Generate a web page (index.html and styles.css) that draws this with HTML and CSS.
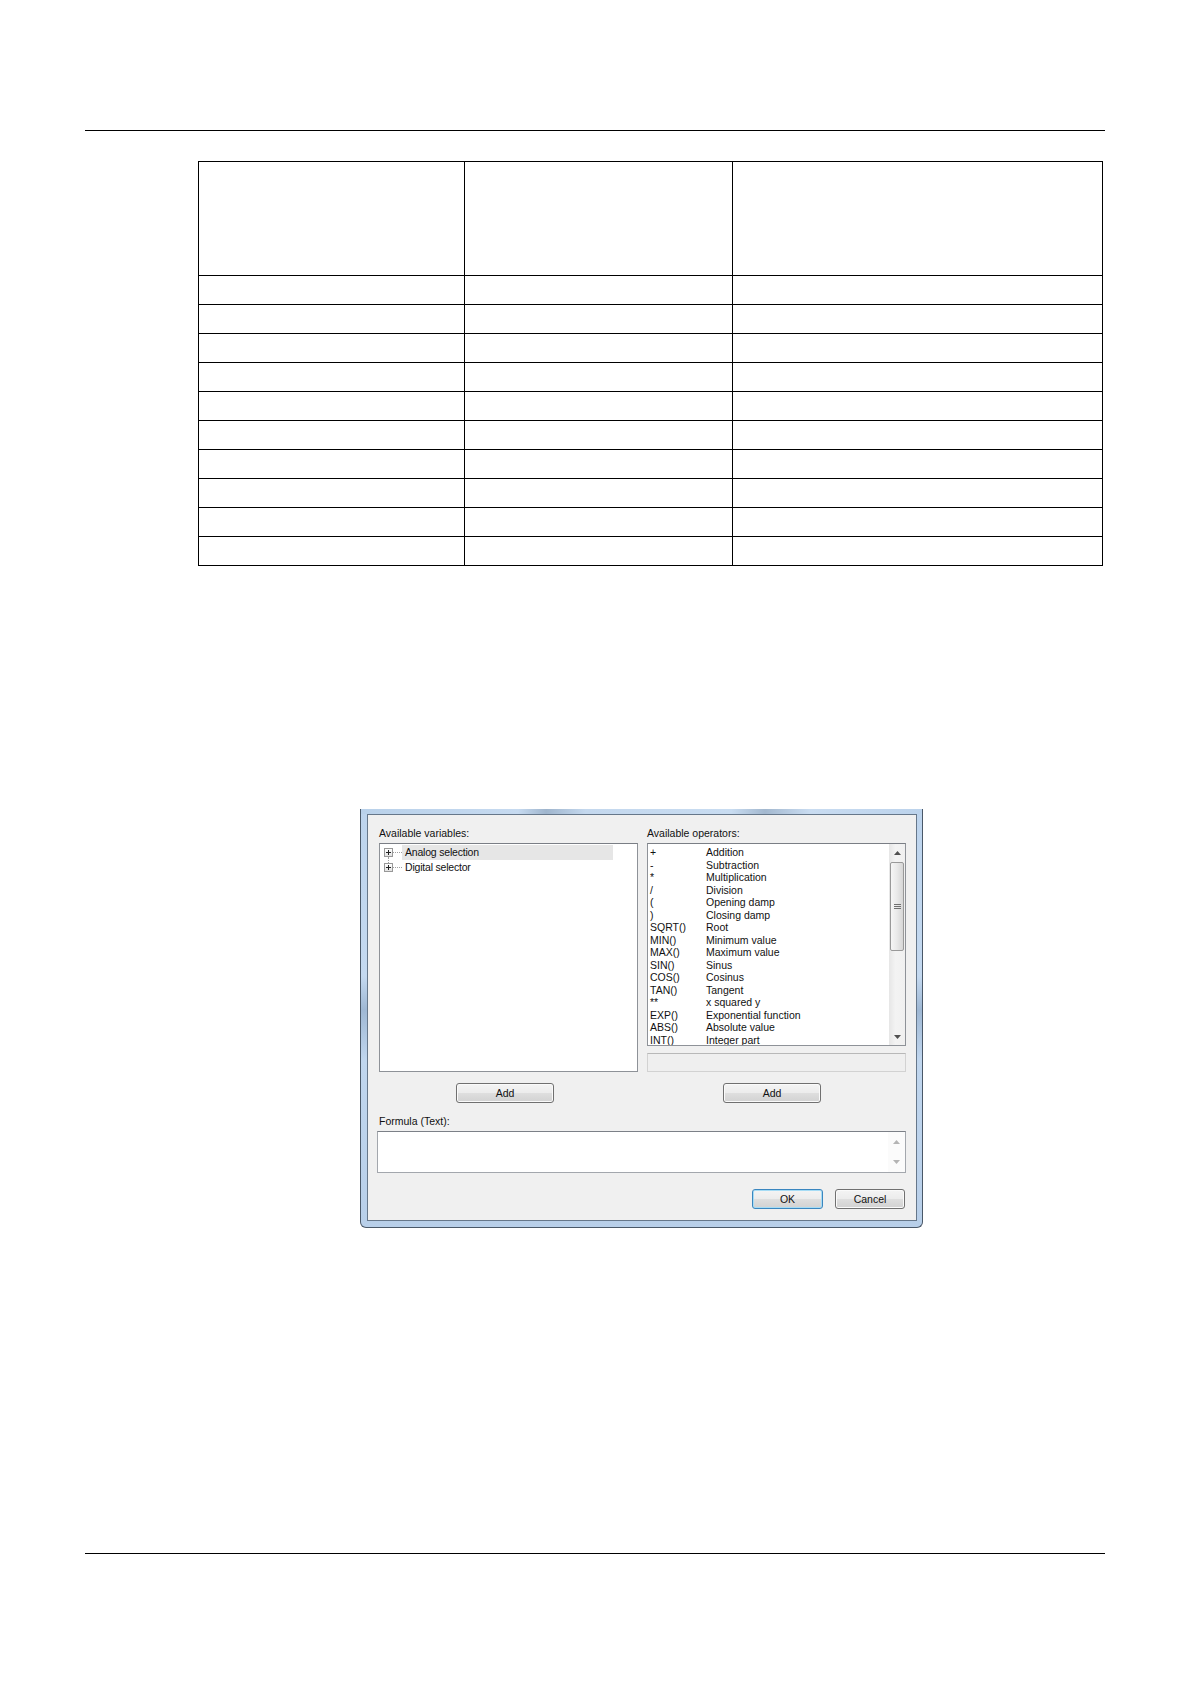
FILE: index.html
```html
<!DOCTYPE html>
<html lang="en">
<head>
<meta charset="utf-8">
<title>Formula editor</title>
<link rel="stylesheet" href="styles.css">
</head>
<body>
<div class="page">
  <div class="rule"></div>

  <div class="grid">
    <div class="cell"></div><div class="cell"></div><div class="cell"></div>
    <div class="cell"></div><div class="cell"></div><div class="cell"></div>
    <div class="cell"></div><div class="cell"></div><div class="cell"></div>
    <div class="cell"></div><div class="cell"></div><div class="cell"></div>
    <div class="cell"></div><div class="cell"></div><div class="cell"></div>
    <div class="cell"></div><div class="cell"></div><div class="cell"></div>
    <div class="cell"></div><div class="cell"></div><div class="cell"></div>
    <div class="cell"></div><div class="cell"></div><div class="cell"></div>
    <div class="cell"></div><div class="cell"></div><div class="cell"></div>
    <div class="cell"></div><div class="cell"></div><div class="cell"></div>
    <div class="cell"></div><div class="cell"></div><div class="cell"></div>
  </div>

  <div class="dialog">
    <div class="panel">
      <div class="cols">
        <div class="col">
          <div class="label">Available variables:</div>
          <div class="box tree">
            <div class="node first">
              <span class="exp"><svg width="9" height="9" viewBox="0 0 9 9"><path d="M2 4.5H7M4.5 2V7" stroke="#222" stroke-width="1"/></svg></span>
              <span class="dots"></span>
              <span class="txt sel">Analog selection</span>
            </div>
            <div class="node">
              <span class="exp"><svg width="9" height="9" viewBox="0 0 9 9"><path d="M2 4.5H7M4.5 2V7" stroke="#222" stroke-width="1"/></svg></span>
              <span class="dots"></span>
              <span class="txt">Digital selector</span>
            </div>
          </div>
        </div>
        <div class="col">
          <div class="label">Available operators:</div>
          <div class="box ops">
            <div class="oplist">
              <div class="op"><span class="sym">+</span><span>Addition</span></div>
              <div class="op"><span class="sym">-</span><span>Subtraction</span></div>
              <div class="op"><span class="sym">*</span><span>Multiplication</span></div>
              <div class="op"><span class="sym">/</span><span>Division</span></div>
              <div class="op"><span class="sym">(</span><span>Opening damp</span></div>
              <div class="op"><span class="sym">)</span><span>Closing damp</span></div>
              <div class="op"><span class="sym">SQRT()</span><span>Root</span></div>
              <div class="op"><span class="sym">MIN()</span><span>Minimum value</span></div>
              <div class="op"><span class="sym">MAX()</span><span>Maximum value</span></div>
              <div class="op"><span class="sym">SIN()</span><span>Sinus</span></div>
              <div class="op"><span class="sym">COS()</span><span>Cosinus</span></div>
              <div class="op"><span class="sym">TAN()</span><span>Tangent</span></div>
              <div class="op"><span class="sym">**</span><span>x squared y</span></div>
              <div class="op"><span class="sym">EXP()</span><span>Exponential function</span></div>
              <div class="op"><span class="sym">ABS()</span><span>Absolute value</span></div>
              <div class="op"><span class="sym">INT()</span><span>Integer part</span></div>
            </div>
            <div class="vscroll">
              <div class="arrow"><svg width="7" height="4" viewBox="0 0 7 4"><polygon points="3.5,0 7,4 0,4" fill="#505050"/></svg></div>
              <div class="track">
                <div class="thumb"><svg width="7" height="6" viewBox="0 0 7 6"><path d="M0 0.5H7M0 2.5H7M0 4.5H7" stroke="#707070" stroke-width="1"/></svg></div>
              </div>
              <div class="arrow"><svg width="7" height="4" viewBox="0 0 7 4"><polygon points="0,0 7,0 3.5,4" fill="#505050"/></svg></div>
            </div>
          </div>
          <div class="disabled-box"></div>
        </div>
      </div>

      <div class="cols addrow">
        <div class="col"><button class="btn add">Add</button></div>
        <div class="col"><button class="btn add add-right">Add</button></div>
      </div>

      <div class="label formula-label">Formula (Text):</div>
      <div class="box formula">
        <div class="formula-text"></div>
        <div class="vscroll light">
          <div class="arrow"><svg width="7" height="4" viewBox="0 0 7 4"><polygon points="3.5,0 7,4 0,4" fill="#b4b4b4"/></svg></div>
          <div class="arrow"><svg width="7" height="4" viewBox="0 0 7 4"><polygon points="0,0 7,0 3.5,4" fill="#b4b4b4"/></svg></div>
        </div>
      </div>

      <div class="actions">
        <button class="btn ok">OK</button>
        <button class="btn cancel">Cancel</button>
      </div>
    </div>
  </div>

  <div class="rule rule-bottom"></div>
</div>
</body>
</html>
```

FILE: styles.css
```css
html, body {
  margin: 0;
  padding: 0;
  background: #ffffff;
}

.page {
  width: 1190px;
  padding-top: 130px;
  font-family: "Liberation Sans", Arial, sans-serif;
  color: #000;
}

.rule {
  margin-left: 85px;
  width: 1020px;
  height: 1px;
  background: #000;
}

.rule-bottom {
  margin-top: 325px;
}

/* Empty table */
.grid {
  margin: 30px 0 0 198px;
  display: grid;
  grid-template-columns: 266px 268px 370px;
  grid-template-rows: 114px repeat(10, 29px);
  width: max-content;
  border-top: 1px solid #000;
  border-left: 1px solid #000;
}

.cell {
  box-sizing: border-box;
  border-right: 1px solid #000;
  border-bottom: 1px solid #000;
}

/* Dialog */
.dialog {
  margin: 243px 0 0 360px;
  width: 563px;
  height: 419px;
  box-sizing: border-box;
  border: 1px solid #4a5868;
  border-top: 0;
  border-radius: 0 0 6px 6px;
  padding: 5px 5px 6px 6px;
  background:
    linear-gradient(to right, #b9d1ea 0%, #c6daf0 28%, #9fb5cd 33%, #c4d8ee 40%, #c8dcf1 66%, #a3b8cf 72%, #c9dcf1 80%, #bcd3ec 100%) top / 100% 5px no-repeat,
    linear-gradient(to bottom, #bdd4ed 0%, #c4d9f0 40%, #9fb8d4 48%, #c0d6ee 60%, #b8cfe9 100%);
}

.panel {
  box-sizing: border-box;
  height: 100%;
  border: 1px solid #66778a;
  background: #f0f0f0;
  padding: 11px 10px 0 11px;
  font-size: 10.5px;
}

.cols {
  display: grid;
  grid-template-columns: 259px 259px;
  column-gap: 9px;
}

.label {
  height: 14px;
  line-height: 14px;
  margin-bottom: 3px;
  color: #111;
  white-space: nowrap;
}

.box {
  box-sizing: border-box;
  background: #fff;
  border: 1px solid #8e9298;
  border-top-color: #7a7e85;
}

/* Tree */
.tree {
  height: 229px;
  padding-top: 1px;
}

.node {
  position: relative;
  display: flex;
  align-items: center;
  height: 15px;
  padding-left: 4px;
}

.exp {
  box-sizing: border-box;
  width: 9px;
  height: 9px;
  border: 1px solid #989898;
  background: linear-gradient(#ffffff, #e2e2e2);
  display: flex;
  align-items: center;
  justify-content: center;
}

.exp svg {
  display: block;
  margin: -1px;
}

.first::after {
  content: "";
  position: absolute;
  left: 8px;
  top: 12px;
  height: 6px;
  border-left: 1px dotted #a0a0a0;
}

.dots {
  width: 9px;
  border-top: 1px dotted #a0a0a0;
}

.txt {
  height: 15px;
  line-height: 15px;
  padding-left: 3px;
  width: 208px;
  letter-spacing: -0.2px;
  color: #111;
}

.txt.sel {
  background: #e6e6e6;
}

/* Operators list */
.ops {
  display: flex;
  height: 203px;
  overflow: hidden;
}

.oplist {
  flex: 1;
  padding: 2px 0 0 2px;
  overflow: hidden;
}

.op {
  display: grid;
  grid-template-columns: 56px auto;
  height: 12.5px;
  line-height: 12.5px;
  white-space: nowrap;
  color: #111;
}

.vscroll {
  width: 16px;
  display: flex;
  flex-direction: column;
  background: linear-gradient(to right, #e6e6e6, #f3f3f3 40%, #f0f0f0);
}

.arrow {
  height: 17px;
  display: flex;
  align-items: center;
  justify-content: center;
}

.arrow svg {
  display: block;
}

.track {
  flex: 1;
  padding-top: 1px;
}

.thumb {
  box-sizing: border-box;
  height: 89px;
  margin: 0 1px;
  border: 1px solid #999;
  border-radius: 2px;
  background: linear-gradient(to right, #f6f6f6, #e9e9e9 50%, #d6d6d6);
  display: flex;
  align-items: center;
  justify-content: center;
}

.thumb svg {
  display: block;
}

.disabled-box {
  box-sizing: border-box;
  height: 19px;
  margin-top: 7px;
  border: 1px solid #d2d2d2;
  border-top-color: #b8b8b8;
  background: #efefef;
}

/* Buttons */
.btn {
  box-sizing: border-box;
  height: 20px;
  padding: 0;
  font-family: "Liberation Sans", Arial, sans-serif;
  font-size: 10.5px;
  color: #111;
  border: 1px solid #707070;
  border-radius: 3px;
  background: linear-gradient(#f4f4f4 0%, #ececec 48%, #dedede 52%, #d2d2d2 100%);
  box-shadow: inset 0 0 0 1px #fafafa;
}

.addrow {
  margin-top: 11px;
}

.add {
  width: 98px;
  margin-left: 77px;
}

.add-right {
  margin-left: 76px;
}

/* Formula */
.formula-label {
  margin-top: 11px;
}

.formula {
  display: flex;
  height: 42px;
  margin-left: -2px;
  border-color: #a3a7ad;
  border-top-color: #7c8087;
}

.formula-text {
  flex: 1;
}

.vscroll.light {
  width: 17px;
  background: #fbfbfb;
  justify-content: space-between;
  padding: 2px 0;
  box-sizing: border-box;
}

.vscroll.light .arrow {
  height: 16px;
}

/* Action buttons */
.actions {
  display: flex;
  justify-content: flex-end;
  gap: 12px;
  margin-top: 16px;
  padding-right: 1px;
}

.ok {
  width: 71px;
  border-color: #3a86bf;
  box-shadow: inset 0 0 0 1px #a6dcf5;
}

.cancel {
  width: 70px;
}
```
